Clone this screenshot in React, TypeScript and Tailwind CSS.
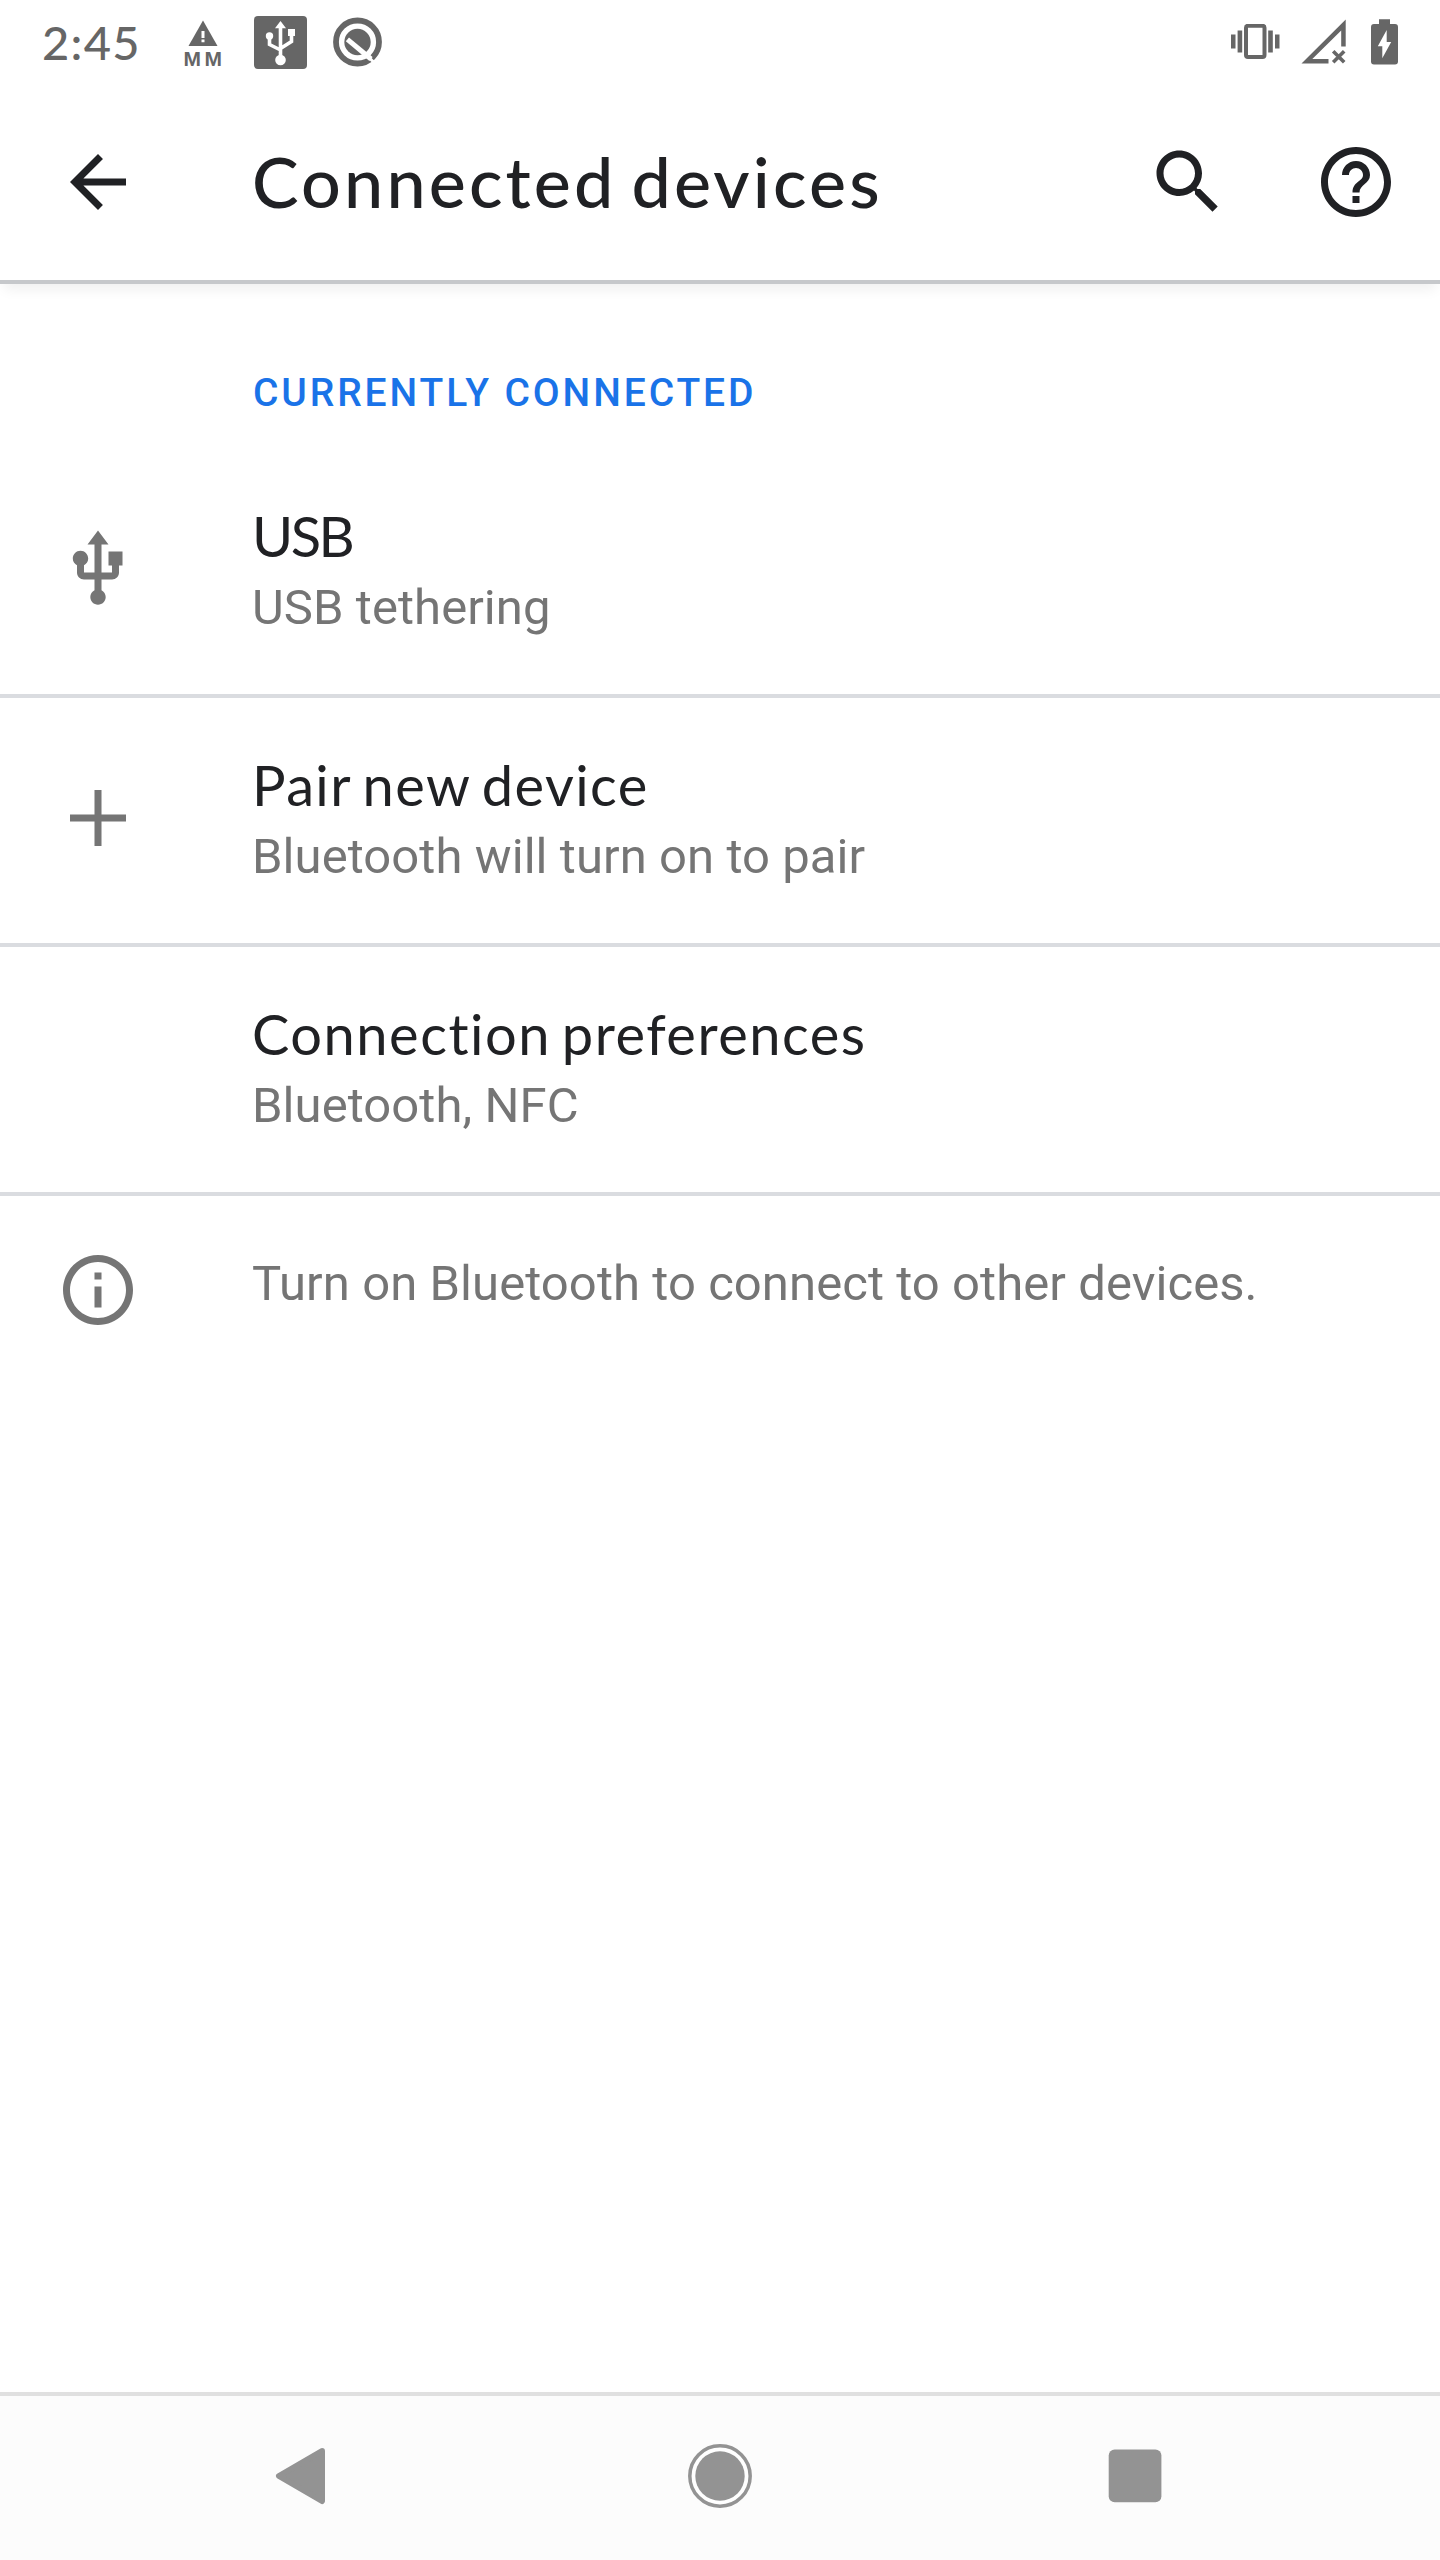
import type { ReactNode } from "react";

const USB_PATH =
  "M15 7v4h1v2h-3V5h2l-3-4-3 4h2v8H8v-2.07c.7-.37 1.2-1.08 1.2-1.93 0-1.21-.99-2.2-2.2-2.2-1.21 0-2.2.99-2.2 2.2 0 .85.5 1.56 1.2 1.93V13c0 1.11.89 2 2 2h3v3.05c-.71.37-1.2 1.1-1.2 1.95 0 1.22.99 2.2 2.2 2.2 1.21 0 2.2-.98 2.2-2.2 0-.85-.49-1.58-1.2-1.95V15h3c1.11 0 2-.89 2-2v-2h1V7h-4z";

function Icon({ d }: { d: string }) {
  return (
    <svg viewBox="0 0 24 24" className="size-[84px] shrink-0 fill-current">
      <path d={d} />
    </svg>
  );
}

function StatusBar() {
  return (
    <div className="flex h-[84px] items-start justify-between pr-[42px] pl-[42px] text-[#666666]">
      <div className="flex items-start">
        <span className="mt-[14px] w-[142px] font-['Lato'] text-[47px] leading-[56px] font-medium tracking-[1.300px]">
          2:45
        </span>
        <div className="mt-[20px] flex w-[38px] flex-col items-center">
          <svg viewBox="0 0 30 26" className="h-[26px] w-[30px]">
            <path fill="currentColor" d="M15 .5 29.5 26H.5z" />
            <path fill="#fff" d="M13.5 11h3v7h-3zM13.5 19.500h3v2.700h-3z" />
          </svg>
          <span className="mt-[3px] pl-[3px] font-['Liberation_Sans'] text-[21px] leading-[20px] font-bold tracking-[3.500px]">
            MM
          </span>
        </div>
        <svg viewBox="0 0 53 53" className="mt-[16px] ml-[32px] size-[53px]">
          <rect width="53" height="53" rx="4" fill="currentColor" />
          <g fill="none" stroke="#fff" strokeWidth="3.600">
            <path d="M26.500 9v35M15.500 20v8.500l11 5.500M37.500 18v7.500l-11 7" />
          </g>
          <g fill="#fff">
            <path d="M26.500 5 32 12.200H21zM34 13h7v7h-7z" />
            <circle cx="15.500" cy="20" r="3.700" />
            <circle cx="26.500" cy="44" r="5.300" />
          </g>
        </svg>
        <svg viewBox="0 0 50 50" className="mt-[17px] ml-[26px] size-[50px]">
          <circle cx="24.500" cy="25" r="21.500" fill="none" stroke="currentColor" strokeWidth="5.800" />
          <circle cx="24.500" cy="25" r="13.200" fill="currentColor" />
          <path d="M14.400 22.300 38 42" fill="none" stroke="#fff" strokeWidth="5" />
          <path d="m34 38.500 8 8" fill="none" stroke="#fff" strokeWidth="3" />
        </svg>
      </div>
      <div className="flex items-start">
        <svg viewBox="0 0 50 36" className="mt-[24px] h-[36px] w-[50px]">
          <path
            fill="currentColor"
            d="M1 10.500h4.500v14H1zM7.600 6.500h4.600v22H7.600zM38.200 6.500h4.600v22h-4.600zM45 10.500h4.500v14H45z"
          />
          <rect x="16" y="1.800" width="18.500" height="31.200" rx="2" fill="none" stroke="currentColor" strokeWidth="4" />
        </svg>
        <svg viewBox="0 0 46 46" className="mt-[19px] ml-[21px] size-[46px]">
          <path
            fill="currentColor"
            d="M44.700.5V27.500h-4.500V11.500L11.300 40.100H27.500v4.300H.5z"
          />
          <path d="m32.200 32.300 11 11M43.200 32.300l-11 11" fill="none" stroke="currentColor" strokeWidth="3.600" />
        </svg>
        <svg viewBox="0 0 27 46" className="mt-[19px] ml-[24px] h-[46px] w-[27px]">
          <path
            fill="currentColor"
            d="M8 .3h11V5h5q3 0 3 3v34.500q0 3-3 3H3q-3 0-3-3V8q0-3 3-3h5z"
          />
          <path fill="#fff" d="M15.700 11v12h4.500L11.300 39.200V27.300H6.800z" />
        </svg>
      </div>
    </div>
  );
}

function AppBar() {
  return (
    <header className="flex h-[200px] items-start border-b-4 border-[#c6c8cb] pt-[56px] pr-[42px] pl-[56px] text-[#202124] shadow-[0_10px_12px_-4px_rgba(0,0,0,0.06)]">
      <Icon d="M20 11H7.830l5.590-5.590L12 4l-8 8 8 8 1.410-1.410L7.830 13H20v-2z" />
      <h1 className="-mt-[1px] ml-[112px] flex-1 font-['Lato'] text-[70px] leading-[84px] font-medium tracking-[3.150px] [word-spacing:-6px] whitespace-nowrap">
        Connected devices
      </h1>
      <div className="flex gap-[84px]">
        <Icon d="M15.500 14h-.79l-.28-.27C15.410 12.590 16 11.110 16 9.500 16 5.910 13.090 3 9.500 3S3 5.910 3 9.500 5.910 16 9.500 16c1.610 0 3.090-.59 4.230-1.570l.27.28v.79l5 4.990L20.490 19l-4.990-5zm-6 0C7.010 14 5 11.990 5 9.500S7.010 5 9.500 5 14 7.010 14 9.500 11.990 14 9.500 14z" />
        <Icon d="M11 18h2v-2h-2v2zm1-16C6.480 2 2 6.480 2 12s4.480 10 10 10 10-4.480 10-10S17.520 2 12 2zm0 18c-4.410 0-8-3.590-8-8s3.590-8 8-8 8 3.590 8 8-3.590 8-8 8zm0-14c-2.210 0-4 1.790-4 4h2c0-1.100.9-2 2-2s2 .9 2 2c0 2-3 1.750-3 5h2c0-2.250 3-2.500 3-5 0-2.210-1.790-4-4-4z" />
      </div>
    </header>
  );
}

function Row({
  icon,
  title,
  summary,
  titleClass,
  divided = true,
}: {
  icon?: ReactNode;
  title: string;
  summary: string;
  titleClass: string;
  divided?: boolean;
}) {
  return (
    <div
      className={`flex h-[249px] items-start border-t-4 pl-[56px] ${divided ? "border-[#dadce0]" : "border-transparent"}`}
    >
      <div className="mt-[78px] mr-[112px] size-[84px] text-[#757575]">{icon}</div>
      <div className="pt-[47px] whitespace-nowrap">
        <div className={`font-['Lato'] text-[56px] leading-[80px] text-[#202124] ${titleClass}`}>{title}</div>
        <div className="font-['Roboto'] text-[49px] leading-[64px] tracking-[0.070px] text-[#757575]">{summary}</div>
      </div>
    </div>
  );
}

function NavigationBar() {
  return (
    <nav className="flex h-[168px] items-start justify-between border-t-4 border-[#e0e0e0] bg-[#fcfcfc] pt-[48px] pr-[273px] pl-[268px] text-[#939393]">
      <svg viewBox="0 0 64 64" className="size-[64px]">
        <path
          d="M54 7 11 32 54 57z"
          fill="currentColor"
          stroke="currentColor"
          strokeWidth="6"
          strokeLinejoin="round"
        />
      </svg>
      <svg viewBox="0 0 64 64" className="ml-[5px] size-[64px]">
        <circle cx="32" cy="32" r="30.200" fill="#fff" stroke="currentColor" strokeWidth="3.500" />
        <circle cx="32" cy="32" r="24.700" fill="currentColor" />
      </svg>
      <svg viewBox="0 0 64 64" className="size-[64px]">
        <rect x="5.700" y="5.600" width="52.700" height="52.700" rx="6" fill="currentColor" />
      </svg>
    </nav>
  );
}

export default function App() {
  return (
    <div className="flex h-[2560px] w-[1440px] flex-col overflow-hidden bg-white">
      <StatusBar />
      <AppBar />
      <main className="flex-1">
        <h2 className="h-[161px] pt-[85px] pl-[253px] font-['Roboto'] text-[39px] leading-[48px] font-medium tracking-[2.880px] whitespace-nowrap text-[#1a73e8]">
          CURRENTLY CONNECTED
        </h2>
        <Row icon={<Icon d={USB_PATH} />} title="USB" summary="USB tethering" titleClass="tracking-[-2.500px]" divided={false} />
        <Row
          icon={<Icon d="M20 13h-7v7h-2v-7H4v-2h7V4h2v7h7v2z" />}
          title="Pair new device"
          summary="Bluetooth will turn on to pair"
          titleClass="tracking-[1.400px] [word-spacing:-4px]"
        />
        <Row
          title="Connection preferences"
          summary="Bluetooth, NFC"
          titleClass="tracking-[1.500px] [word-spacing:-5px]"
        />
        <div className="flex items-start border-t-4 border-[#dadce0] pt-[52px] pl-[56px] text-[#757575]">
          <Icon d="M11 7h2v2h-2zm0 4h2v6h-2zm1-9C6.480 2 2 6.480 2 12s4.480 10 10 10 10-4.480 10-10S17.520 2 12 2zm0 18c-4.410 0-8-3.590-8-8s3.590-8 8-8 8 3.590 8 8-3.590 8-8 8z" />
          <p className="ml-[112px] pt-[4px] font-['Roboto'] text-[49px] leading-[64px] tracking-[0.070px] whitespace-nowrap">
            Turn on Bluetooth to connect to other devices.
          </p>
        </div>
      </main>
      <NavigationBar />
    </div>
  );
}
